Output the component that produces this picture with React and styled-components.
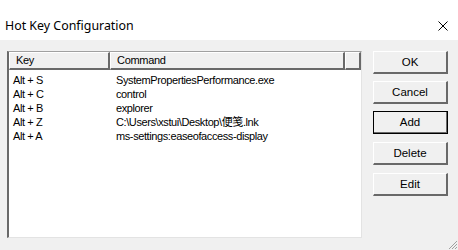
import React from "react";
import styled, { createGlobalStyle } from "styled-components";

const GlobalStyle = createGlobalStyle`
  html, body {
    margin: 0;
    padding: 0;
    background: #f0f0f0;
  }
  body {
    width: 458px;
    height: 250px;
    overflow: hidden;
  }
`;

const Window = styled.div`
  width: 458px;
  height: 250px;
  display: flex;
  flex-direction: column;
  background: #f0f0f0;
  font-family: "Liberation Sans", "Noto Sans CJK SC", sans-serif;
  position: relative;
`;

const TitleBar = styled.div`
  height: 40px;
  box-sizing: border-box;
  padding: 11px 9px 0 5px;
  background: #ffffff;
  display: flex;
  align-items: center;
  justify-content: space-between;
`;

const Title = styled.div`
  font-family: "Noto Sans", "Open Sans", sans-serif;
  font-size: 12.4px;
  color: #000;
`;

const CloseIcon = styled.svg`
  width: 10px;
  height: 10px;
  margin-right: 1px;
`;

const Body = styled.div`
  flex: 1;
  display: flex;
  padding: 11px 10px 0 7px;
`;

const ListBox = styled.div`
  width: 355px;
  height: 187px;
  box-sizing: border-box;
  background: #fff;
  border-style: solid;
  border-width: 1px 1px 1px 2px;
  border-color: #a0a0a0 #e3e3e3 #e3e3e3 #696969;
  display: flex;
  flex-direction: column;
  overflow: hidden;
`;

const HeaderRow = styled.div`
  display: flex;
  height: 18px;
  flex: none;
`;

const HeaderCell = styled.div`
  width: ${(p) => p.$w}px;
  flex: ${(p) => (p.$w ? "none" : 1)};
  box-sizing: border-box;
  background: #f0f0f0;
  border-style: solid;
  border-width: 1px 2px 2px 1px;
  border-color: #ffffff #696969 #696969 #ffffff;
  font-size: 11px;
  letter-spacing: -0.3px;
  line-height: 15px;
  padding-left: 6px;
  color: #000;
  white-space: nowrap;
`;

const Rows = styled.div`
  padding-top: 3px;
  display: flex;
  flex-direction: column;
`;

const Row = styled.div`
  display: flex;
  height: 14px;
  font-size: 11px;
  letter-spacing: -0.4px;
  line-height: 14px;
  color: #000;
`;

const Cell = styled.div`
  width: ${(p) => p.$w}px;
  flex: none;
  padding-left: ${(p) => p.$pl}px;
  box-sizing: border-box;
  white-space: nowrap;
`;

const ButtonColumn = styled.div`
  display: flex;
  flex-direction: column;
  gap: 7px;
  margin-left: 11px;
`;

const Button = styled.button`
  width: 75px;
  height: 23px;
  box-sizing: border-box;
  padding: 0;
  margin: 0;
  background: #f0f0f0;
  font-family: "Liberation Sans", sans-serif;
  font-size: 11.5px;
  color: #000;
  border-style: solid;
  border-width: 1px 2px 2px 1px;
  border-color: #ffffff #696969 #696969 #ffffff;
  outline: ${(p) => (p.$default ? "1px solid #000" : "none")};
  outline-offset: -1px;
  margin-top: ${(p) => p.$gap || 0}px;
`;

const Grip = styled.svg`
  position: absolute;
  right: 0;
  bottom: 0;
  width: 12px;
  height: 12px;
`;

const rows = [
  ["Alt + S", "SystemPropertiesPerformance.exe"],
  ["Alt + C", "control"],
  ["Alt + B", "explorer"],
  ["Alt + Z", "C:\\Users\\xstui\\Desktop\\便笺.lnk"],
  ["Alt + A", "ms-settings:easeofaccess-display"],
];

export default function App() {
  return (
    <Window>
      <GlobalStyle />
      <TitleBar>
        <Title>Hot Key Configuration</Title>
        <CloseIcon viewBox="0 0 10 10">
          <path d="M0.5 0.5 L9.5 9.5 M9.5 0.5 L0.5 9.5" stroke="#000" strokeWidth="1" />
        </CloseIcon>
      </TitleBar>
      <Body>
        <ListBox>
          <HeaderRow>
            <HeaderCell $w={101}>Key</HeaderCell>
            <HeaderCell $w={235}>Command</HeaderCell>
            <HeaderCell />
          </HeaderRow>
          <Rows>
            {rows.map(([key, cmd]) => (
              <Row key={key}>
                <Cell $w={102} $pl={4}>{key}</Cell>
                <Cell $w={240} $pl={5}>{cmd}</Cell>
              </Row>
            ))}
          </Rows>
        </ListBox>
        <ButtonColumn>
          <Button>OK</Button>
          <Button>Cancel</Button>
          <Button $default>Add</Button>
          <Button $gap={1}>Delete</Button>
          <Button $gap={1}>Edit</Button>
        </ButtonColumn>
      </Body>
      <Grip viewBox="0 0 12 12">
        <path d="M11 3 L3 11 M11 6 L6 11 M11 9 L9 11" stroke="#a0a0a0" strokeWidth="1" />
      </Grip>
    </Window>
  );
}
